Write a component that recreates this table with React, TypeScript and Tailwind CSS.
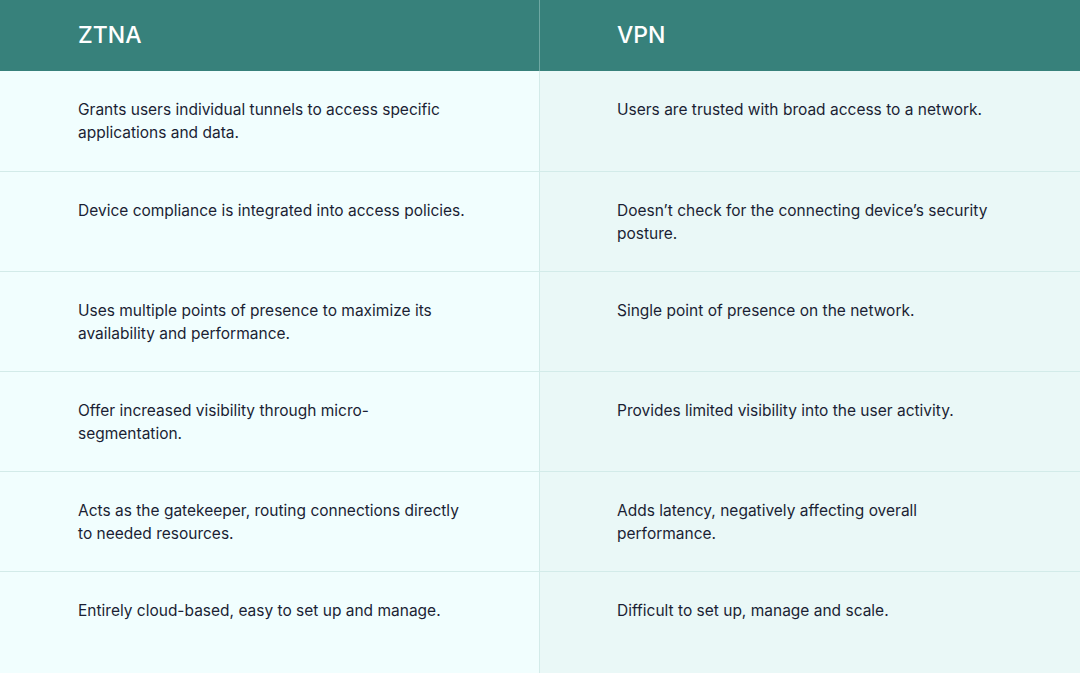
const rows: [string, string][] = [
  [
    'Grants users individual tunnels to access specific applications and data.',
    'Users are trusted with broad access to a network.',
  ],
  [
    'Device compliance is integrated into access policies.',
    'Doesn\u2019t check for the connecting device\u2019s security posture.',
  ],
  [
    'Uses multiple points of presence to maximize its availability and performance.',
    'Single point of presence on the network.',
  ],
  [
    'Offer increased visibility through micro-segmentation.',
    'Provides limited visibility into the user activity.',
  ],
  [
    'Acts as the gatekeeper, routing connections directly to needed resources.',
    'Adds latency, negatively affecting overall performance.',
  ],
  [
    'Entirely cloud-based, easy to set up and manage.',
    'Difficult to set up, manage and scale.',
  ],
];

export default function App() {
  return (
    <div className="w-[1080px] h-[673px] overflow-hidden bg-[#eaf8f7] font-['Inter',sans-serif] text-[#1b1f34]">
      {/* header */}
      <div className="grid grid-cols-2 h-[71px] bg-[#37817b] text-white">
        <div className="flex items-center pl-[78px] border-r border-[#6ea8a3] text-[23px] font-medium">
          ZTNA
        </div>
        <div className="flex items-center pl-[77px] text-[23px] font-medium">VPN</div>
      </div>

      {/* rows */}
      {rows.map(([ztna, vpn], i) => (
        <div
          key={i}
          className={`grid grid-cols-2 ${i === 0 ? 'h-[100px]' : i === rows.length - 1 ? 'h-[102px] border-t border-[#d3ebe9]' : 'h-[100px] border-t border-[#d3ebe9]'}`}
        >
          <div className="bg-[#f1fefe] border-r border-[#d3ebe9] pl-[78px] pt-[27px]">
            <p className="max-w-[392px] text-[15.5px] leading-[23px]">{ztna}</p>
          </div>
          <div className="bg-[#eaf8f7] pl-[77px] pt-[27px]">
            <p className="max-w-[392px] text-[15.5px] leading-[23px]">{vpn}</p>
          </div>
        </div>
      ))}
    </div>
  );
}
